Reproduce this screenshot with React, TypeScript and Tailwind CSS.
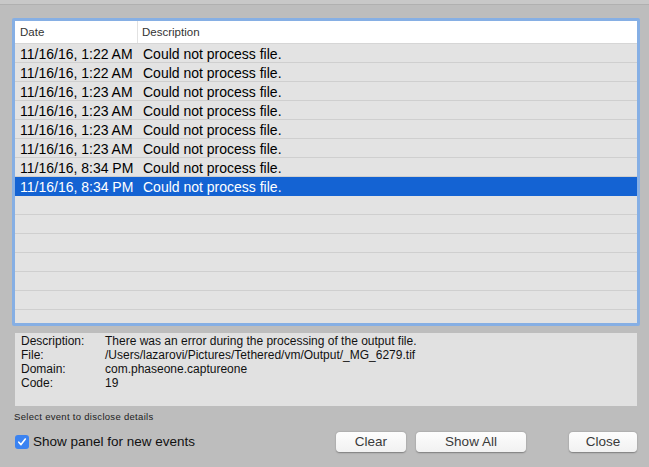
const events = [
  "11/16/16, 1:22 AM",
  "11/16/16, 1:22 AM",
  "11/16/16, 1:23 AM",
  "11/16/16, 1:23 AM",
  "11/16/16, 1:23 AM",
  "11/16/16, 1:23 AM",
  "11/16/16, 8:34 PM",
  "11/16/16, 8:34 PM",
];

const details = [
  ["Description:", "There was an error during the processing of the output file."],
  ["File:", "/Users/lazarovi/Pictures/Tethered/vm/Output/_MG_6279.tif"],
  ["Domain:", "com.phaseone.captureone"],
  ["Code:", "19"],
];

function Button({ label, className }: { label: string; className: string }) {
  return (
    <button
      className={`${className} h-[20px] shrink-0 rounded-[4px] bg-gradient-to-b from-[#fdfdfd] to-[#f1f1f1] text-[13.5px] leading-[20px] text-[#3a3a3a] shadow-[0_0.5px_1.5px_rgba(0,0,0,0.35)]`}
    >
      {label}
    </button>
  );
}

export default function App() {
  return (
    <div className="flex h-[467px] w-[649px] flex-col overflow-hidden bg-[#bdbdbd] font-['Liberation_Sans',Arial,sans-serif] text-black">
      <div className="h-[5px] border-b border-[#b0b0b0] bg-[#c8c8c8]" />

      <div className="ml-[12px] mt-[13px] h-[308px] w-[628px] overflow-hidden rounded-[2px] border-[3px] border-[#86afe4] bg-[#e3e3e3]">
        <div className="flex h-[23px] border-b border-[#d6d6d6] bg-white text-[11.5px] leading-[22px] text-[#333]">
          <div className="w-[123px] border-r border-[#e2e2e2] pl-[5px]">Date</div>
          <div className="pl-[4px]">Description</div>
        </div>
        {events.map((date, i) => {
          const selected = i === events.length - 1;
          return (
            <div
              key={i}
              className={`flex h-[19px] text-[14px] leading-[20px] ${
                selected ? "bg-[#1463d3] text-white" : "border-b border-[#cfcfcf]"
              }`}
            >
              <div className="w-[124px] pl-[5px]">{date}</div>
              <div className="pl-[4px]">Could not process file.</div>
            </div>
          );
        })}
        {Array.from({ length: 7 }).map((_, i) => (
          <div key={i} className="h-[19px] border-b border-[#cfcfcf]" />
        ))}
      </div>

      <div className="ml-[15px] mt-[7px] h-[73px] w-[622px] bg-[#e1e1e1] pl-[6px] pt-[1px] text-[12px] leading-[14px] text-[#111]">
        {details.map(([label, value]) => (
          <div key={label} className="flex">
            <div className="w-[84px]">{label}</div>
            <div>{value}</div>
          </div>
        ))}
      </div>

      <div className="ml-[14px] mt-[5px] text-[9.5px] leading-[12px] tracking-[0.3px] text-[#222]">
        Select event to disclose details
      </div>

      <div className="mt-[9px] flex h-[20px] items-center pl-[15px] pr-[12px]">
        <div className="flex h-[14px] w-[14px] items-center justify-center rounded-[3px] bg-[#3b83f1]">
          <svg width="10" height="10" viewBox="0 0 10 10" fill="none">
            <path d="M1.8 5.2 L4 7.6 L8.3 2" stroke="white" strokeWidth="1.6" strokeLinecap="round" strokeLinejoin="round" />
          </svg>
        </div>
        <span className="ml-[4px] text-[13.5px] text-[#111]">Show panel for new events</span>
        <Button label="Clear" className="ml-auto w-[70px]" />
        <Button label="Show All" className="ml-[10px] w-[110px]" />
        <Button label="Close" className="ml-[43px] w-[68px]" />
      </div>
    </div>
  );
}
